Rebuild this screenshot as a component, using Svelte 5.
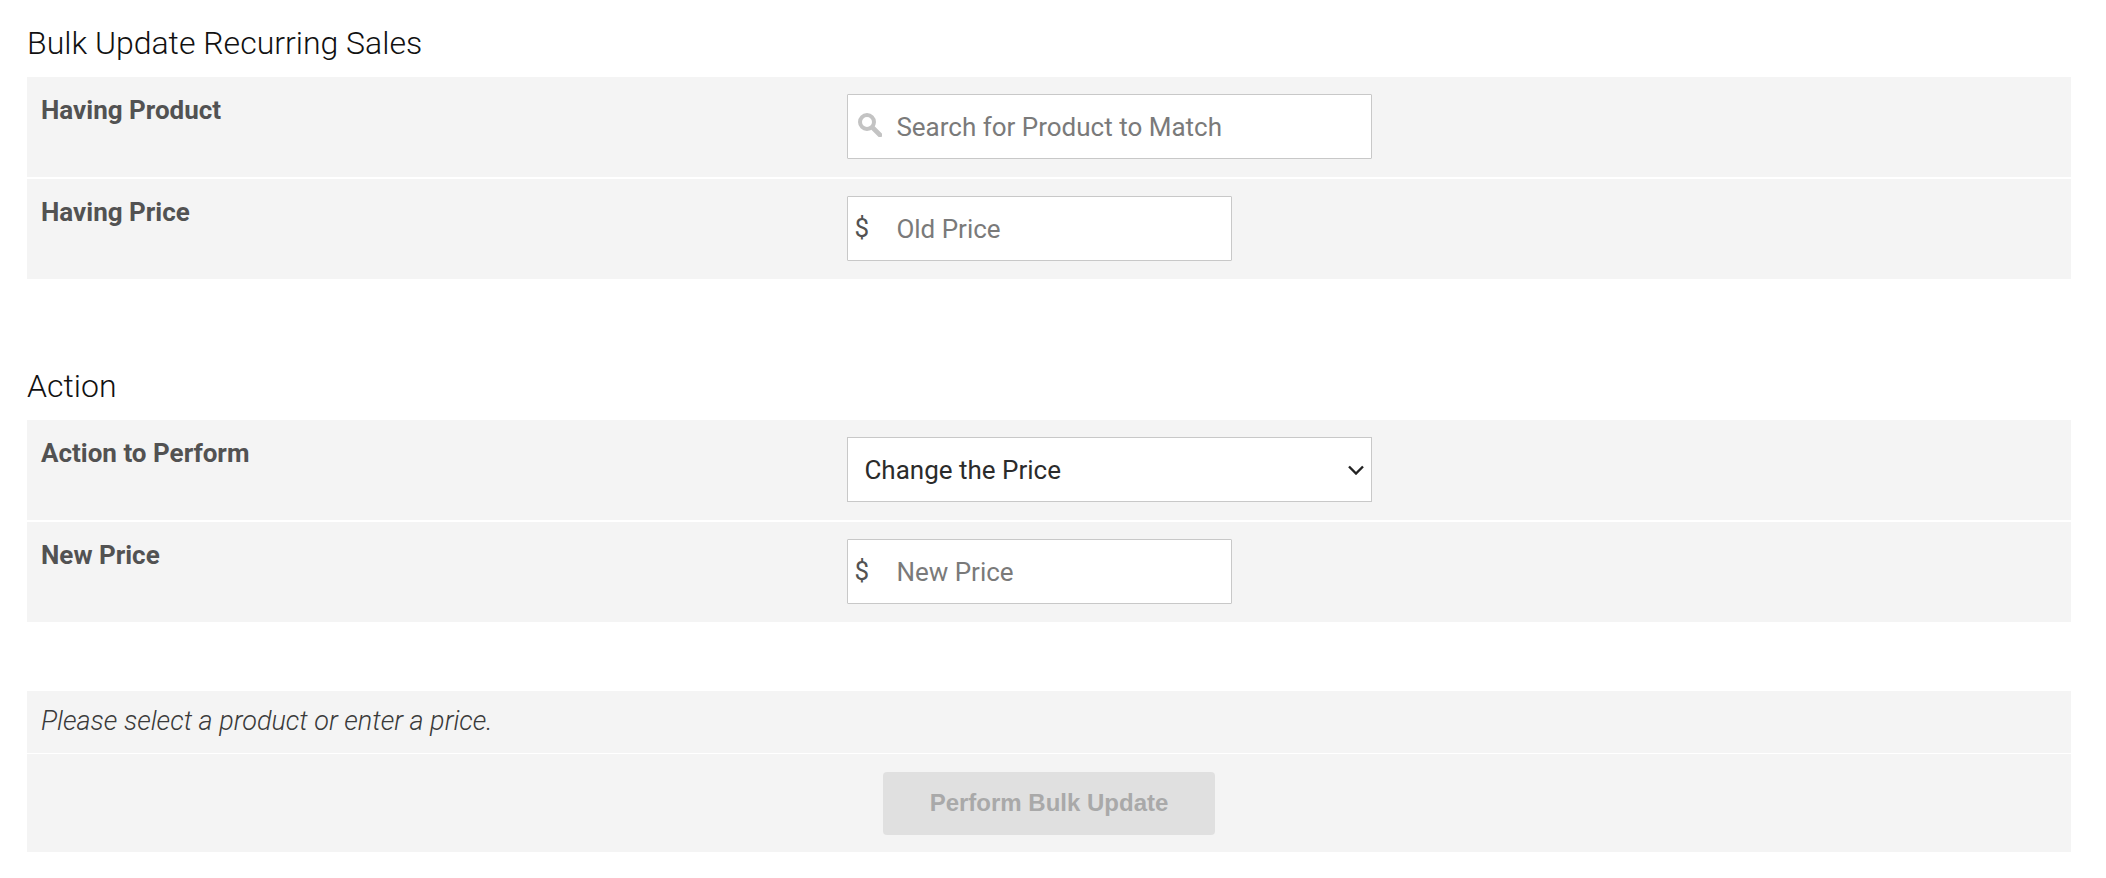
<script>
  let product = $state('');
  let oldPrice = $state('');
  let newPrice = $state('');
  let action = $state('price');
  const ready = $derived(product.trim() !== '' || oldPrice.trim() !== '');
</script>

<form class="page" onsubmit={(event) => event.preventDefault()}>
  <section class="group">
    <h2>Bulk Update Recurring Sales</h2>
    <div class="panel">
      <div class="row">
        <label for="product">Having Product</label>
        <div class="field wide">
          <svg class="search" viewBox="0 0 24 24" aria-hidden="true">
            <circle cx="9" cy="9" r="7" fill="none" stroke="currentColor" stroke-width="4" />
            <path d="M14.5 14.5 L22 22" stroke="currentColor" stroke-width="4.6" stroke-linecap="round" />
          </svg>
          <input id="product" class="inset" type="text" placeholder="Search for Product to Match" bind:value={product} />
        </div>
      </div>
      <div class="row">
        <label for="old-price">Having Price</label>
        <div class="field">
          <span class="currency">$</span>
          <input id="old-price" class="inset" type="text" inputmode="decimal" placeholder="Old Price" bind:value={oldPrice} />
        </div>
      </div>
    </div>
  </section>

  <section class="group">
    <h2>Action</h2>
    <div class="panel">
      <div class="row">
        <label for="action">Action to Perform</label>
        <div class="field wide">
          <select id="action" bind:value={action}>
            <option value="price">Change the Price</option>
          </select>
          <svg class="chevron" viewBox="0 0 16 10" aria-hidden="true">
            <path d="M1 1.5 L8 8.5 L15 1.5" fill="none" stroke="currentColor" stroke-width="2.4" />
          </svg>
        </div>
      </div>
      <div class="row">
        <label for="new-price">New Price</label>
        <div class="field">
          <span class="currency">$</span>
          <input id="new-price" class="inset" type="text" inputmode="decimal" placeholder="New Price" bind:value={newPrice} />
        </div>
      </div>
    </div>
  </section>

  <div class="summary">
    <p>Please select a product or enter a price.</p>
    <div class="submit">
      <button type="submit" disabled={!ready}>Perform Bulk Update</button>
    </div>
  </div>
</form>

<style>
  :global(body) {
    background: #fff;
  }

  .page {
    padding: 20px 35px 24px 27px;
    color: #525252;
    font: 26px/32px Roboto, "Liberation Sans", sans-serif;
  }

  .group {
    margin-bottom: 84px;
  }

  .group + .group {
    margin-bottom: 69px;
  }

  h2 {
    margin: 0 0 12px;
    padding-top: 1px;
    color: #111;
    font-size: 32px;
    font-weight: 300;
    line-height: 44px;
  }

  .panel {
    display: grid;
    gap: 2px;
  }

  .row {
    display: grid;
    grid-template-columns: 40% 1fr;
    align-items: start;
    padding: 17px 14px 18px;
    background: #f4f4f4;
  }

  label {
    font-weight: 700;
  }

  .field {
    position: relative;
    width: 385px;
    max-width: 100%;
  }

  .wide {
    width: 525px;
  }

  input,
  select {
    display: block;
    box-sizing: border-box;
    width: 100%;
    height: 65px;
    margin: 0;
    padding: 0 16px;
    border: 1px solid #c8c8c8;
    border-radius: 1px;
    background: #fff;
    color: #2b2b2b;
    font: inherit;
  }

  select {
    appearance: none;
    border-radius: 0;
  }

  .inset {
    padding-left: 48px;
  }

  input::placeholder {
    color: #7a7a7a;
    opacity: 1;
  }

  .search,
  .chevron,
  .currency {
    position: absolute;
    pointer-events: none;
  }

  .search {
    top: 19px;
    left: 11px;
    width: 24px;
    height: 24px;
    color: #c3c3c3;
  }

  .currency {
    top: 16px;
    left: 7px;
  }

  .chevron {
    top: 28px;
    right: 8px;
    width: 16px;
    height: 10px;
    color: #222;
  }

  .summary {
    display: grid;
    gap: 1px;
  }

  p {
    margin: 0;
    padding: 14px 14px 16px;
    background: #f4f4f4;
    color: #3a3a3a;
    font-size: 27px;
    font-style: italic;
    font-weight: 300;
  }

  .submit {
    display: flex;
    justify-content: center;
    padding: 18px 14px 17px;
    background: #f4f4f4;
  }

  button {
    height: 63px;
    padding: 0 47px 2px;
    border: 0;
    border-radius: 4px;
    background: #3b7dbd;
    color: #fff;
    font: 700 24px/32px "Liberation Sans", Arial, sans-serif;
  }

  button:disabled {
    background: #e0e0e0;
    color: #a9a9a9;
  }
</style>
